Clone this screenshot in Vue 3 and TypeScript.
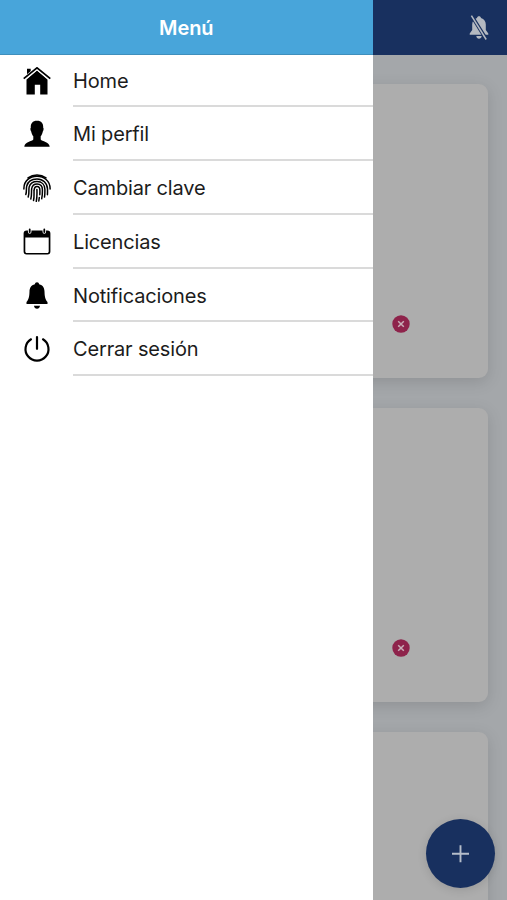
<script setup lang="ts">
type IconName = 'home' | 'person' | 'fingerprint' | 'calendar' | 'bell' | 'power'

interface MenuItem {
  label: string
  icon: IconName
}

const items: MenuItem[] = [
  { label: 'Home', icon: 'home' },
  { label: 'Mi perfil', icon: 'person' },
  { label: 'Cambiar clave', icon: 'fingerprint' },
  { label: 'Licencias', icon: 'calendar' },
  { label: 'Notificaciones', icon: 'bell' },
  { label: 'Cerrar sesión', icon: 'power' },
]

const cards: number[] = [1, 2, 3]
</script>

<template>
  <div class="app">
    <div class="page">
      <header class="topbar">
        <svg class="muted" viewBox="0 0 20 24">
          <path d="M10 .8c-1.100 0-1.800.6-2 1.600C4.800 3.200 3.300 5.800 3.200 9v5.500L.7 18v1.200h18.600V18l-2.500-3.500V9c-.1-3.200-1.600-5.800-4.800-6.600-.2-1-.9-1.600-2-1.600z" fill="#b4b9c1" />
          <path d="M7.300 20.600h5.400c-.2 1.700-1.300 2.700-2.700 2.700s-2.500-1-2.700-2.700z" fill="#b4b9c1" />
          <path d="M2.600 .2L17.400 24" stroke="#18305f" stroke-width="3.600" />
          <path d="M2.400 .2L17.200 24" stroke="#b4b9c1" stroke-width="1.500" />
        </svg>
      </header>
      <main class="feed">
        <article v-for="card in cards" :key="card" class="card">
          <svg v-if="card < 3" class="status" viewBox="0 0 18 18">
            <circle cx="9" cy="9" r="8.700" fill="#8e234b" />
            <path d="M6.200 6.200l5.600 5.600M11.800 6.200l-5.600 5.600" stroke="#c9b0b9" stroke-width="1.500" />
          </svg>
        </article>
      </main>
      <button class="fab" aria-label="Agregar">
        <svg viewBox="0 0 18 18"><path d="M8.500 .3v17M0 8.800h17" stroke="#b5bdca" stroke-width="1.900" /></svg>
      </button>
    </div>

    <aside class="drawer">
      <div class="title">Menú</div>
      <nav>
        <a v-for="item in items" :key="item.label" class="item">
          <svg class="icon" viewBox="0 0 28 28">
            <g v-if="item.icon === 'home'">
              <path d="M4 1.800h3.700v5L4 10z" />
              <path d="M14 3.400l10.500 9V27.500h-7.300v-9.700h-5.400v9.700H3.500V12.400z" />
              <path d="M1 12L14 1.200l13 10.800" fill="none" stroke="#fff" stroke-width="3.400" />
              <path d="M.7 11.600L14 .9l13.300 10.700" fill="none" stroke="#000" stroke-width="1.800" />
            </g>
            <path v-else-if="item.icon === 'person'" d="M14 .8c4.500 0 6.500 2.700 6.200 7 .7.400.5 2.700-.4 3.600-.4 2.300-1.200 3.700-2.100 4.800v3.300c1.200 2.200 8.600 1.900 9 7.200H1.300c.4-5.300 7.800-5 9-7.200v-3.300c-.9-1.100-1.700-2.500-2.100-4.800-.9-.9-1.100-3.200-.4-3.600-.3-4.300 1.700-7 6.200-7z" />
            <g v-else-if="item.icon === 'fingerprint'" fill="none" stroke="#000" stroke-width="1.500" stroke-linecap="round">
              <path d="M5 3.900A15 15 0 0 1 23 3.900" />
              <path d="M.9 15C.6 6.300 7.400 2.300 14 2.300S27.300 6.500 27.100 15" />
              <path d="M2.800 20.600c1.100-3 .2-5.600.9-8.500C4.800 7.400 9 4.900 14 4.900c6 0 10.300 4.200 10.500 10.200 0 2 .1 3.700-.1 5.600" />
              <path d="M5.200 23c1.400-4 .2-7.400 1-10.100 1-3.300 4-5.400 7.800-5.400 4.800 0 7.900 3.200 7.900 7.900 0 2.800.1 5.100-.4 7.700" />
              <path d="M7.800 25c1.200-4 .4-7.500.9-10.500.5-2.700 2.500-4.500 5.300-4.500 3.400 0 5.400 2.400 5.400 5.800 0 3.300.1 5.800-.7 9" />
              <path d="M10.500 26.500c1-4.300.3-7.500.6-10.300.2-2.400 1.200-3.700 2.900-3.700 1.900 0 2.900 1.500 2.900 3.900 0 1.900 0 3.200-.1 4.400M16.300 23.500l-.5 3.500" />
              <path d="M13.900 15.400c.2 4.200.2 7.700-.6 12" />
            </g>
            <g v-else-if="item.icon === 'calendar'">
              <path d="M3.600 2.600h20.800a3 3 0 0 1 3 3v18a3 3 0 0 1-3 3H3.600a3 3 0 0 1-3-3v-18a3 3 0 0 1 3-3zM2.300 9.600v13.800c0 .9.600 1.500 1.500 1.500h20.400c.9 0 1.500-.6 1.500-1.500V9.600z" fill-rule="evenodd" />
              <path d="M6.700 1.700v2.400M21.300 1.700v2.400" stroke="#fff" stroke-width="3.500" stroke-linecap="round" />
              <path d="M6.700 1.500v2.500M21.300 1.500v2.500" stroke="#000" stroke-width="1.800" stroke-linecap="round" />
            </g>
            <g v-else-if="item.icon === 'bell'">
              <path d="M14 .3c1.200 0 2 .8 2.100 1.900 4 .9 5.300 4 5.400 7.300.2 4.700.4 7.300 3 10.600v1.900h-21v-1.900c2.600-3.300 2.800-5.900 3-10.600.1-3.300 1.400-6.400 5.400-7.300C12 1.100 12.800.3 14 .3z" />
              <path d="M11 23.800h6c-.3 1.900-1.300 3-3 3s-2.700-1.100-3-3z" />
            </g>
            <g v-else fill="none" stroke="#000" stroke-width="2.200" stroke-linecap="round">
              <path d="M8 4.300a11.500 11.500 0 1 0 12 0" />
              <path d="M14 2v11.800" />
            </g>
          </svg>
          <span class="label">{{ item.label }}</span>
        </a>
      </nav>
    </aside>
  </div>
</template>

<style>
body {
  margin: 0;
}
</style>

<style scoped>
.app {
  position: relative;
  width: 507px;
  height: 900px;
  overflow: hidden;
  font-family: Inter, 'Liberation Sans', sans-serif;
}
.page {
  height: 900px;
  overflow: hidden;
  background: #a4a7aa;
}
.topbar {
  box-sizing: border-box;
  height: 54.500px;
  padding: 15px 18px 0 0;
  display: flex;
  justify-content: flex-end;
  align-items: flex-start;
  background: #18305f;
}
.muted {
  width: 20px;
  height: 25px;
}
.feed {
  display: flex;
  flex-direction: column;
  gap: 30px;
  padding: 29.500px 19px 0;
}
.card {
  box-sizing: border-box;
  flex: none;
  height: 294px;
  padding: 231px 0 0 373px;
  border-radius: 9px;
  background: #adadad;
  box-shadow: 0 4px 16px rgba(0, 0, 0, 0.13);
}
.status {
  display: block;
  width: 18px;
  height: 18px;
}
.fab {
  position: absolute;
  left: 426px;
  top: 819px;
  width: 69px;
  height: 69px;
  padding: 0;
  border: 0;
  border-radius: 50%;
  display: flex;
  align-items: center;
  justify-content: center;
  background: #18305f;
  box-shadow: 0 2px 10px rgba(0, 0, 0, 0.12);
}
.fab svg {
  width: 18px;
  height: 18px;
}
.drawer {
  position: absolute;
  left: 0;
  top: 0;
  width: 372.500px;
  height: 900px;
  background: #fff;
}
.title {
  box-sizing: border-box;
  height: 54.500px;
  padding-top: 3px;
  display: flex;
  align-items: center;
  justify-content: center;
  background: #48a5da;
  border-bottom: 1px solid #3f8fbc;
  color: #fff;
  font-size: 20px;
  font-weight: 600;
  letter-spacing: -0.1px;
}
.item {
  height: 53.800px;
  display: flex;
  align-items: stretch;
}
nav {
  margin-top: -1px;
}
.icon {
  flex: none;
  width: 28px;
  height: 28px;
  margin: 13px 22px 0 23px;
}
.label {
  box-sizing: border-box;
  flex: 1;
  border-bottom: 2px solid #dadada;
  color: #1c1c1c;
  font-size: 20px;
  letter-spacing: -0.16px;
  line-height: 54px;
}
</style>
